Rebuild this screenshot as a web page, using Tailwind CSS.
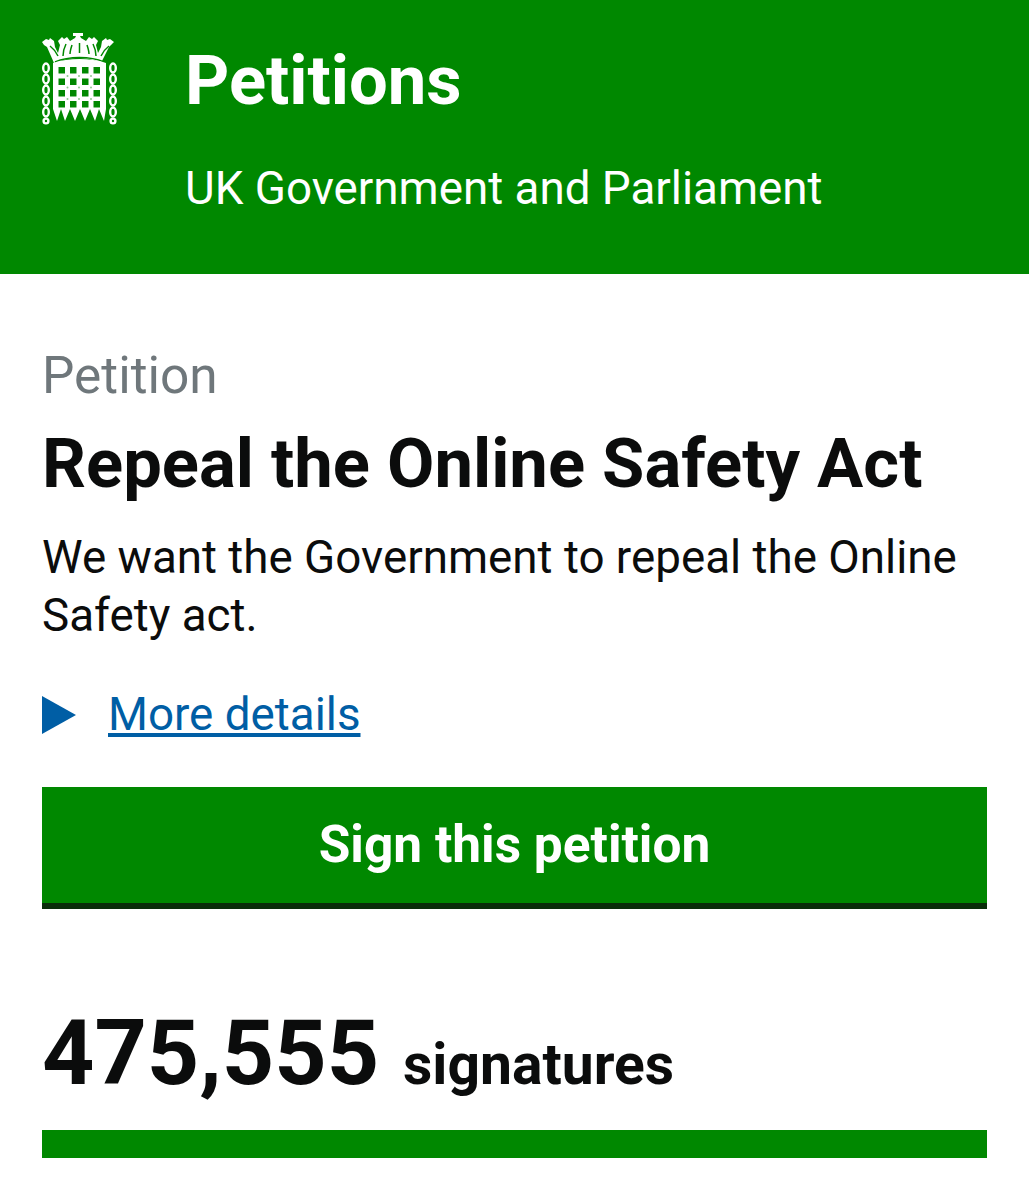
<!DOCTYPE html>
<html lang="en">
<head>
	<meta charset="utf-8">
	<script src="https://cdn.jsdelivr.net/npm/@tailwindcss/browser@4"></script>
	<title>Petitions</title>
</head>
<body class="bg-white overflow-hidden font-[Roboto,sans-serif] text-[#0b0c0c]">
	<header class="h-[274px] bg-[#008800] text-white flex px-[42px] pt-[33px]">
		<svg class="w-[75px] h-[92px] shrink-0" viewBox="0 0 75 92">
			<!-- crown -->
			<path fill="#fff" d="M0 9l4-3 3 1 1-2 4 3 1 6 3 6 2-8-2-4 4-4 2 2 3-2 3 4 5-3 1-2h-3V0h3l1-1h2l1 1h3v3h-3l1 2 5 3 3-4 3 2 2-2 4 4-2 4 2 8 3-6 1-6 4-3 1 2 3-1 4 3-3 3-2 2-8 16c-8-4-16-5-23-5s-15 1-24 5L5 14 2 12z"/>
			<path fill="none" stroke="#008800" stroke-width="1.5" d="M8 13c4 3 6 6 8 10M24 11c-2 4-3 8-3 12M51 11c2 4 3 8 3 12M67 13c-4 3-6 6-8 10M37.500 10v10M30 12c-1 3-2 6-2 9M45 12c1 3 2 6 2 9"/>
			<path fill="none" stroke="#008800" stroke-width="1.500" d="M13 29c8-3.500 17-4.500 24.500-4.500S54 25.500 62 29"/>
			<!-- portcullis -->
			<path fill="#fff" fill-rule="evenodd" d="M11 30c8-3 17-4 26.500-4S56 27 64 30v46l-2 12-5-12-4 12-5-12-5 12-5-12-5 12-5-12-5 12-4-12-4 12-4-12z
				M16.500 34h6.500v6.500h-6.500z M28 34h6.500v6.500H28z M40 34h6.500v6.500H40z M51.500 34H58v6.500h-6.500z
				M16.500 45.500h6.500V52h-6.500z M28 45.500h6.500V52H28z M40 45.500h6.500V52H40z M51.500 45.500H58V52h-6.500z
				M16.500 57h6.500v6.500h-6.500z M28 57h6.500v6.500H28z M40 57h6.500v6.500H40z M51.500 57H58v6.500h-6.500z
				M16.500 68h6.500v6.500h-6.500z M28 68h6.500v6.500H28z M40 68h6.500v6.500H40z M51.500 68H58v6.500h-6.500z"/>
			<g fill="#008800" fill-opacity=".45">
				<circle cx="25.500" cy="43" r="1"/><circle cx="37" cy="43" r="1"/><circle cx="49" cy="43" r="1"/>
				<circle cx="25.500" cy="54.500" r="1"/><circle cx="37" cy="54.500" r="1"/><circle cx="49" cy="54.500" r="1"/>
				<circle cx="25.500" cy="66" r="1"/><circle cx="37" cy="66" r="1"/><circle cx="49" cy="66" r="1"/>
			</g>
			<!-- chains -->
			<g fill="none" stroke="#fff" stroke-width="2.400">
				<ellipse cx="4" cy="35" rx="2.800" ry="4.500"/>
				<ellipse cx="4" cy="46" rx="2.800" ry="4.500"/>
				<ellipse cx="4" cy="57" rx="2.800" ry="4.500"/>
				<ellipse cx="4" cy="68" rx="2.800" ry="4.500"/>
				<ellipse cx="4" cy="79" rx="2.800" ry="4.500"/>
				<circle cx="4" cy="88" r="2.400"/>
				<ellipse cx="71" cy="35" rx="2.800" ry="4.500"/>
				<ellipse cx="71" cy="46" rx="2.800" ry="4.500"/>
				<ellipse cx="71" cy="57" rx="2.800" ry="4.500"/>
				<ellipse cx="71" cy="68" rx="2.800" ry="4.500"/>
				<ellipse cx="71" cy="79" rx="2.800" ry="4.500"/>
				<circle cx="71" cy="88" r="2.400"/>
			</g>
		</svg>
		<div class="ml-[68px]">
			<h1 class="text-[68.75px] leading-[80px] font-bold mt-[8px]">Petitions</h1>
			<p class="text-[45.75px] leading-[54px] mt-[41px]">UK Government and Parliament</p>
		</div>
	</header>
	<main class="px-[42px] pt-[72px]">
		<p class="text-[51.4px] leading-[60px] text-[#6f777b]">Petition</p>
		<h2 class="text-[68.75px] leading-[80px] font-bold mt-[18px]">Repeal the Online Safety Act</h2>
		<p class="text-[45.75px] leading-[58px] mt-[25px]">We want the Government to repeal the Online Safety act.</p>
		<div class="flex items-center mt-[41px]">
			<span class="w-0 h-0 border-y-[19px] border-y-transparent border-l-[34px] border-l-[#005ea5]"></span>
			<a class="ml-[32px] text-[45.75px] leading-[58px] text-[#005ea5] underline">More details</a>
		</div>
		<button class="block w-full h-[122px] mt-[43px] bg-[#008800] border-b-[6px] border-[#0a2d0a] text-white text-[51.4px] font-bold text-center">Sign this petition</button>
		<div class="flex items-baseline mt-[90px]">
			<span class="text-[91.4px] leading-[107px] font-bold">475,555</span>
			<span class="ml-[24px] text-[57px] font-bold">signatures</span>
		</div>
		<div class="h-[28px] mt-[22px] bg-[#008800]"></div>
	</main>
</body>
</html>
